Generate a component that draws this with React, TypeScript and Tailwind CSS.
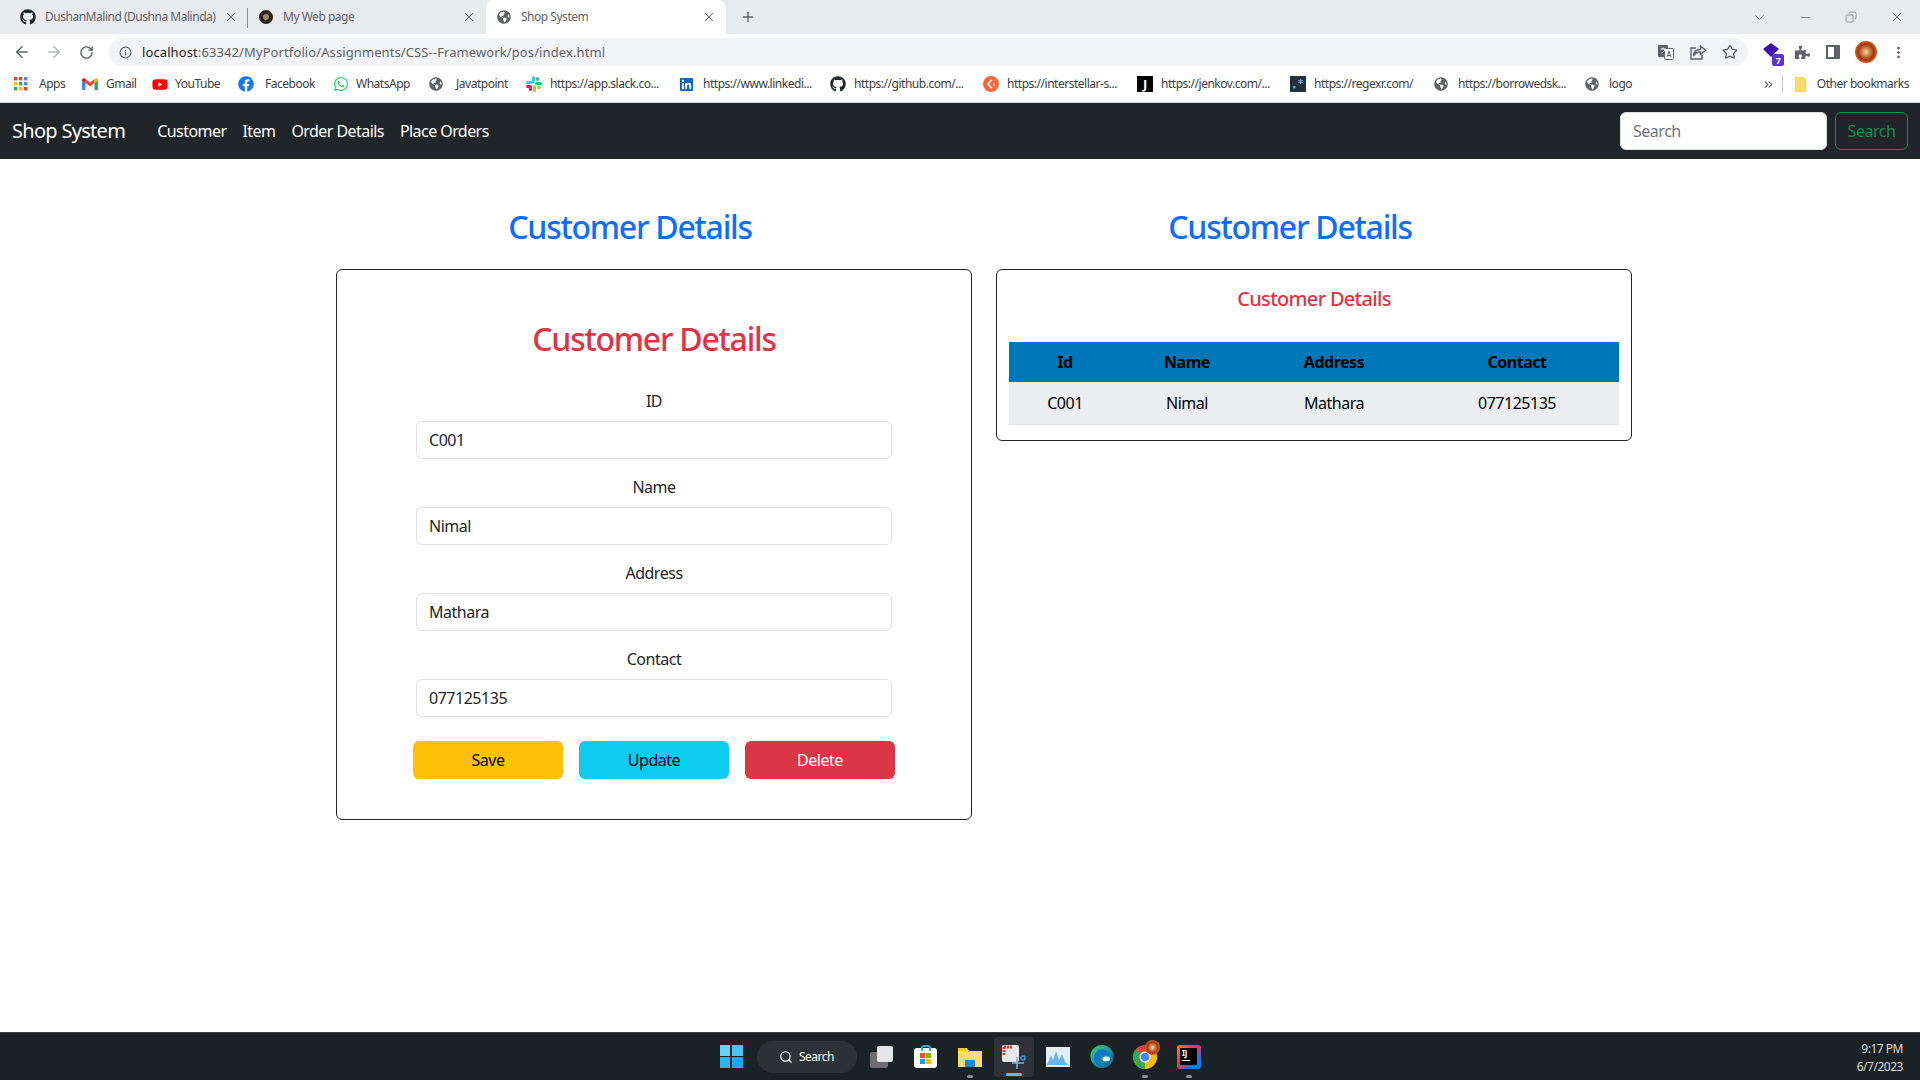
import React from "react";
import { ArrowLeft, ArrowRight, RotateCw, Info, Star, X, Plus, ChevronDown, Minus, Copy, MoreVertical, Search, ChevronsRight } from "lucide-react";
import { FaGithub, FaGlobeAmericas, FaFacebook, FaWhatsapp, FaLinkedin, FaPuzzlePiece, FaYoutube } from "react-icons/fa";

const Globe = () => <FaGlobeAmericas className="text-[#5f6368]" size={14} />;

const Gmail = () => (
  <svg width="16" height="14" viewBox="0 0 16 12">
    <path d="M0 2v9a1 1 0 0 0 1 1h2.5V5z" fill="#4285f4" />
    <path d="M16 2v9a1 1 0 0 1-1 1h-2.5V5z" fill="#34a853" />
    <path d="M3.5 5L8 8.4 12.5 5V1L8 4.4 3.5 1z" fill="#ea4335" />
    <path d="M0 2c0-1.6 1.9-2 3-1.4l.5.4v4L0 2.5z" fill="#c5221f" />
    <path d="M16 2c0-1.6-1.9-2-3-1.4l-.5.4v4l3.5-2.5z" fill="#fbbc04" />
  </svg>
);

const Slack = () => (
  <svg width="16" height="16" viewBox="0 0 16 16">
    <rect x="6" y="0" width="3" height="7" rx="1.5" fill="#36c5f0" />
    <rect x="0" y="5" width="7" height="3" rx="1.5" fill="#36c5f0" />
    <rect x="9" y="6" width="7" height="3" rx="1.5" fill="#2eb67d" />
    <rect x="10" y="1" width="3" height="4" rx="1.5" fill="#2eb67d" />
    <rect x="7" y="9" width="3" height="7" rx="1.5" fill="#ecb22e" />
    <rect x="11" y="10" width="4" height="3" rx="1.5" fill="#ecb22e" />
    <rect x="0" y="9" width="6" height="3" rx="1.5" fill="#e01e5a" />
    <rect x="3" y="11" width="3" height="4" rx="1.5" fill="#e01e5a" />
  </svg>
);

const AppsGrid = () => (
  <svg width="14" height="14" viewBox="0 0 14 14">
    {[
      [0, 0, "#ea4335"], [5, 0, "#ea4335"], [10, 0, "#4285f4"],
      [0, 5, "#fbbc04"], [5, 5, "#34a853"], [10, 5, "#4285f4"],
      [0, 10, "#34a853"], [5, 10, "#fbbc04"], [10, 10, "#ea4335"],
    ].map(([x, y, c], i) => (
      <rect key={i} x={x as number} y={y as number} width="3.4" height="3.4" fill={c as string} />
    ))}
  </svg>
);

const Interstellar = () => (
  <svg width="16" height="16" viewBox="0 0 16 16">
    <circle cx="8" cy="8" r="8" fill="#f4683a" />
    <path d="M9 3.5L5 8l4 4.5" stroke="#fff" strokeWidth="1.6" fill="none" />
    <path d="M11 7v3" stroke="#fff" strokeWidth="1" />
  </svg>
);

const Jenkov = () => (
  <span className="flex h-4 w-4 items-center justify-center bg-black text-[13px] font-bold leading-none text-white">J</span>
);

const Regex = () => (
  <svg width="16" height="16" viewBox="0 0 16 16">
    <rect width="16" height="16" fill="#25303b" />
    <rect x="3" y="10" width="2.5" height="2.5" fill="#6ea8d6" />
    <path d="M10.5 3v5M8.3 4.3l4.4 2.4M12.7 4.3L8.3 6.7" stroke="#6ea8d6" strokeWidth="1.1" />
  </svg>
);

const bookmarks: { w: number; icon: React.ReactNode; label: string; gap: number }[] = [
  { w: 68, icon: <AppsGrid />, label: "Apps", gap: 9 },
  { w: 70, icon: <Gmail />, label: "Gmail", gap: 8 },
  { w: 86, icon: <FaYoutube className="text-[#ff0000]" size={17} />, label: "YouTube", gap: 7 },
  { w: 95, icon: <FaFacebook className="text-[#1877f2]" size={16} />, label: "Facebook", gap: 11 },
  { w: 96, icon: <FaWhatsapp className="text-[#25d366]" size={16} />, label: "WhatsApp", gap: 7 },
  { w: 97, icon: <Globe />, label: "Javatpoint", gap: 11 },
  { w: 153, icon: <Slack />, label: "https://app.slack.co...", gap: 8 },
  { w: 151, icon: <FaLinkedin className="text-[#0a66c2]" size={15} />, label: "https://www.linkedi...", gap: 8 },
  { w: 153, icon: <FaGithub className="text-[#24292f]" size={16} />, label: "https://github.com/...", gap: 8 },
  { w: 154, icon: <Interstellar />, label: "https://interstellar-s...", gap: 8 },
  { w: 153, icon: <Jenkov />, label: "https://jenkov.com/...", gap: 8 },
  { w: 144, icon: <Regex />, label: "https://regexr.com/", gap: 8 },
  { w: 151, icon: <Globe />, label: "https://borrowedsk...", gap: 8 },
  { w: 60, icon: <Globe />, label: "logo", gap: 8 },
];

function Tab({ icon, label, active, width, sep }: { icon: React.ReactNode; label: string; active?: boolean; width: string; sep?: boolean }) {
  return (
    <div className={`relative flex h-[34px] items-center px-[10px] ${width} ${active ? "rounded-t-[8px] bg-white" : ""}`}>
      <span className="flex w-[16px] justify-center">{icon}</span>
      <span className="ml-[9px] flex-1 whitespace-nowrap text-[12px] text-[#5f6368]">{label}</span>
      <X size={14} strokeWidth={1.8} className="text-[#5f6368]" />
      {sep && <span className="absolute right-0 top-[8px] h-[20px] w-px bg-[#8a8d91]" />}
    </div>
  );
}

function Field({ label, value }: { label: string; value: string }) {
  return (
    <div className="mb-4 flex w-[476px] flex-col items-center">
      <label className="mb-2 h-6 text-[16px] leading-6 text-[#212529]">{label}</label>
      <input
        readOnly
        value={value}
        className="h-[38px] w-full rounded-[6px] border border-[#dee2e6] bg-white px-[12px] text-[16px] text-[#212529] outline-none"
      />
    </div>
  );
}

function TaskIcon({ children, className = "" }: { children: React.ReactNode; className?: string }) {
  return <div className={`flex h-6 w-6 items-center justify-center ${className}`}>{children}</div>;
}

const Avatar = ({ className }: { className: string }) => (
  <span className={`rounded-full bg-[radial-gradient(circle,#f7d9a0_0%,#a3360e_50%,#e8701a_78%,#5a1a08_100%)] ${className}`} />
);

export default function App() {
  return (
    <div className="flex h-screen w-full flex-col overflow-hidden bg-white font-['Noto_Sans',sans-serif] tracking-[-0.03em]">
      {/* Tab strip */}
      <div className="flex h-[34px] shrink-0 items-center bg-[#e8eaed] pl-[10px]">
        <Tab width="w-[238px]" sep icon={<FaGithub size={16} className="text-[#24292f]" />} label="DushanMalind (Dushna Malinda)" />
        <Tab
          width="w-[238px]"
          icon={<span className="flex h-[14px] w-[14px] items-center justify-center rounded-full bg-[#2b2418]"><span className="h-[6px] w-[6px] rounded-full bg-[#a08a5a]" /></span>}
          label="My Web page"
        />
        <Tab width="w-[240px]" active icon={<Globe />} label="Shop System" />
        <Plus size={16} strokeWidth={2} className="ml-[14px] text-[#5f6368]" />
        <div className="flex-1" />
        <ChevronDown size={15} strokeWidth={1.2} className="mr-[31px] text-[#5f6368]" />
        <Minus size={15} strokeWidth={1.2} className="mr-[32px] text-[#5f6368]" />
        <Copy size={12} strokeWidth={1.2} className="mr-[32px] -scale-x-100 text-[#5f6368]" />
        <X size={16} strokeWidth={1.2} className="mr-[15px] text-[#5f6368]" />
      </div>

      {/* Toolbar */}
      <div className="flex h-[32px] shrink-0 items-start bg-white pt-[4px]">
        <div className="flex h-[28px] w-[109px] items-center pl-[13px]">
          <ArrowLeft size={18} strokeWidth={2} className="text-[#5f6368]" />
          <ArrowRight size={18} strokeWidth={2} className="ml-[14px] text-[#b4b7bb]" />
          <RotateCw size={15} strokeWidth={2.2} className="ml-[16px] text-[#5f6368]" />
        </div>
        <div className="flex h-[28px] w-[1639px] items-center rounded-full bg-[#f1f3f4] pl-[10px]">
          <Info size={13} strokeWidth={2} className="text-[#5f6368]" />
          <span className="ml-[10px] pt-[2px] text-[13px] tracking-[0.1px] text-[#5f6368]"><span className="text-[#202124]">localhost</span>:63342/MyPortfolio/Assignments/CSS--Framework/pos/index.html</span>
          <div className="flex-1" />
          <svg width="16" height="15" viewBox="0 0 16 15" className="mr-[16px]">
            <rect x="0" y="0" width="10" height="12" rx="1" fill="#5f6368" />
            <rect x="6.5" y="3.5" width="9" height="11" rx="1" fill="#fff" stroke="#5f6368" />
            <path d="M2.5 4h5M5 2.5v1.5M3.5 8c2-1 3-2 3.5-4" stroke="#fff" strokeWidth="1" fill="none" />
            <path d="M9 12l2-6 2 6M9.8 10.5h2.4" stroke="#5f6368" strokeWidth="1" fill="none" />
          </svg>
          <svg width="17" height="15" viewBox="0 0 17 15" fill="none" stroke="#5f6368" strokeWidth="1.4" className="mr-[15px]">
            <path d="M6 3H1v11h11v-4" />
            <path d="M10.5 1l5 4.2-5 4.2V7C7.5 7 5 8 3.5 11c.4-4 3-6.800 7-6.800z" />
          </svg>
          <Star size={16} strokeWidth={2} className="mr-[10px] text-[#5f6368]" />
        </div>
        <div className="flex h-[28px] flex-1 items-center pl-[14px]">
          <div className="relative h-[18px] w-[22px]">
            <svg width="18" height="14" viewBox="0 0 18 14"><path d="M9 0l8 6-8 8-8-8z" fill="#3f0fa8" /></svg>
            <span className="absolute -bottom-[5px] right-0 flex h-[12px] w-[12px] items-center justify-center rounded-[2px] bg-[#5b35c4] text-[9px] font-bold leading-none text-white">7</span>
          </div>
          <FaPuzzlePiece size={15} className="ml-[11px] text-[#5f6368]" />
          <span className="ml-[16px] flex h-[14px] w-[14px] justify-start border-2 border-[#5f6368] bg-[#5f6368]"><span className="h-full w-[6px] bg-white" /></span>
          <Avatar className="ml-[15px] h-[22px] w-[22px]" />
          <MoreVertical size={15} strokeWidth={2.4} className="ml-[14px] text-[#5f6368]" />
        </div>
      </div>

      {/* Bookmarks */}
      <div className="flex h-[37px] shrink-0 items-center border-b border-[#d9dadc] bg-white pl-[14px] text-[12px] text-[#3c4043]">
        {bookmarks.map((b) => (
          <div key={b.label} className="flex shrink-0 items-center" style={{ width: b.w }}>
            <span className="flex w-[16px] shrink-0 justify-start">{b.icon}</span>
            <span className="whitespace-nowrap" style={{ marginLeft: b.gap }}>{b.label}</span>
          </div>
        ))}
        <div className="flex-1" />
        <ChevronsRight size={13} strokeWidth={2} className="mr-[7px] text-[#5f6368]" />
        <span className="mr-[12px] h-[16px] w-px bg-[#c8cacc]" />
        <svg width="12" height="15" viewBox="0 0 12 15" className="mr-[10px]">
          <path d="M0 0h8l3 3v12H0z" fill="#fbd96f" stroke="#e8c04a" strokeWidth="0.5" />
        </svg>
        <span className="mr-[11px] whitespace-nowrap">Other bookmarks</span>
      </div>

      {/* Navbar */}
      <nav className="flex h-[56px] shrink-0 items-center bg-[#212529] px-3">
        <span className="text-[20px] tracking-[-0.035em] text-white">Shop System</span>
        <div className="ml-[32px] flex items-center gap-[16px] text-[16px] tracking-[-0.035em] text-white">
          <span>Customer</span>
          <span>Item</span>
          <span>Order Details</span>
          <span>Place Orders</span>
        </div>
        <div className="flex-1" />
        <input
          placeholder="Search"
          className="h-[38px] w-[207px] rounded-[6px] border border-[#dee2e6] bg-white px-3 text-[16px] outline-none placeholder:text-[#6c757d]"
        />
        <button className="ml-2 h-[38px] w-[73px] rounded-[6px] border border-[#198754] text-[16px] text-[#198754]">Search</button>
      </nav>

      {/* Main */}
      <main className="mx-auto grid w-[1320px] flex-1 grid-cols-2 content-start pt-[49px]">
        <section className="px-3">
          <h2 className="mb-[23px] h-[38px] text-center text-[32px] font-medium leading-[38px] tracking-[-0.039em] text-[#0d6efd]">Customer Details</h2>
          <div className="ml-6 flex h-[551px] w-[636px] flex-col items-center rounded-[6px] border border-[#212529] pt-[50px]">
            <h2 className="mb-[31px] h-[38px] text-[32px] font-medium leading-[38px] tracking-[-0.039em] text-[#dc3545]">Customer Details</h2>
            <Field label="ID" value="C001" />
            <Field label="Name" value="Nimal" />
            <Field label="Address" value="Mathara" />
            <Field label="Contact" value="077125135" />
            <div className="mt-2 flex w-[482px] gap-4">
              <button className="h-[38px] w-[150px] rounded-[6px] bg-[#ffc107] text-[16px] text-black">Save</button>
              <button className="h-[38px] w-[150px] rounded-[6px] bg-[#0dcaf0] text-[16px] text-black">Update</button>
              <button className="h-[38px] w-[150px] rounded-[6px] bg-[#dc3545] text-[16px] text-white">Delete</button>
            </div>
          </div>
        </section>
        <section className="px-3">
          <h2 className="mb-[23px] h-[38px] text-center text-[32px] font-medium leading-[38px] tracking-[-0.039em] text-[#0d6efd]">Customer Details</h2>
          <div className="ml-6 flex h-[172px] w-[636px] flex-col items-center rounded-[6px] border border-[#212529] pt-[17px]">
            <h4 className="mb-[13px] h-[24px] text-[20px] font-medium leading-6 tracking-[-0.035em] text-[#dc3545]">Customer Details</h4>
            <table className="mt-[18px] w-[610px] table-fixed border-collapse text-center text-[16px] text-black">
              <colgroup>
                <col className="w-[112px]" />
                <col className="w-[132px]" />
                <col className="w-[162px]" />
                <col className="w-[204px]" />
              </colgroup>
              <thead>
                <tr className="h-[40px] bg-[#0077b6] font-bold">
                  <th>Id</th>
                  <th>Name</th>
                  <th>Address</th>
                  <th>Contact</th>
                </tr>
              </thead>
              <tbody>
                <tr className="h-[42px] border-b border-[#dee2e6] bg-[#ecedef]">
                  <td>C001</td>
                  <td>Nimal</td>
                  <td>Mathara</td>
                  <td>077125135</td>
                </tr>
              </tbody>
            </table>
          </div>
        </section>
      </main>

      {/* Taskbar */}
      <footer className="relative flex h-[48px] shrink-0 items-center justify-center border-t border-[#3a3f42] bg-[#1b2225]">
        <div className="flex items-center">
          <div className="grid h-[23px] w-[23px] grid-cols-2 gap-[1.5px]">
            <span className="bg-[#63d2fb]" />
            <span className="bg-[#4cc3f7]" />
            <span className="bg-[#2fb4f5]" />
            <span className="bg-[#1ba4f1]" />
          </div>
          <div className="ml-[14px] flex h-[32px] w-[100px] items-center justify-center gap-[6px] rounded-full bg-[#2c3336] text-[12px] text-white">
            <Search size={14} strokeWidth={2} />
            Search
          </div>
          <TaskIcon className="ml-[13px]">
            <span className="relative h-[22px] w-[24px]">
              <span className="absolute bottom-0 left-0 h-[16px] w-[18px] rounded-[2px] bg-[#6b6f71]" />
              <span className="absolute right-[1px] top-0 h-[16px] w-[16px] rounded-[2px] bg-[#e4e5e6]" />
            </span>
          </TaskIcon>
          <TaskIcon className="relative ml-[20px]">
            <span className="absolute left-[7px] top-0 h-[6px] w-[10px] rounded-t-[3px] border-2 border-b-0 border-[#29a8e0]" />
            <span className="mt-[3px] grid h-[20px] w-[23px] grid-cols-2 content-center justify-items-center gap-[1px] rounded-[3px] bg-white px-[6px]">
              <span className="h-[5px] w-[5px] bg-[#f25022]" />
              <span className="h-[5px] w-[5px] bg-[#7fba00]" />
              <span className="h-[5px] w-[5px] bg-[#00a4ef]" />
              <span className="h-[5px] w-[5px] bg-[#ffb900]" />
            </span>
          </TaskIcon>
          <TaskIcon className="relative ml-[20px]">
            <svg width="24" height="22" viewBox="0 0 24 22">
              <path d="M0 2h9l2 3h13v16H0z" fill="#f4c63d" />
              <rect x="0" y="5" width="24" height="16" fill="#fbdc6a" />
              <rect x="7" y="14" width="10" height="7" rx="1" fill="#1a86d9" />
            </svg>
            <span className="absolute -bottom-[9px] left-[9px] h-[3px] w-[6px] rounded-full bg-[#8a8f92]" />
          </TaskIcon>
          <div className="relative ml-[12px] flex h-[40px] w-[40px] items-center justify-center rounded-[4px] bg-[#2d3336]">
            <svg width="24" height="24" viewBox="0 0 24 24">
              <rect x="0" y="0" width="17" height="17" rx="2" fill="#e8e8e8" />
              <path d="M2 2h8M2 2v8" stroke="#d13a26" strokeWidth="3" strokeDasharray="2 1" />
              <path d="M15 12v12M10 18h12" stroke="#7fb0d8" strokeWidth="1.5" />
              <circle cx="21" cy="13" r="2" fill="none" stroke="#3aa0e8" strokeWidth="1.5" />
            </svg>
            <span className="absolute bottom-[1px] left-[12px] h-[3px] w-[16px] rounded-full bg-[#4cc2ff]" />
          </div>
          <TaskIcon className="ml-[12px]">
            <svg width="24" height="20" viewBox="0 0 24 20">
              <rect width="24" height="20" fill="#e6eef5" />
              <path d="M1 18L5 8l2 5 3-9 3 9 3-6 3 8 4 3z" fill="#6cb5e8" />
            </svg>
          </TaskIcon>
          <TaskIcon className="ml-[20px]">
            <svg width="25" height="25" viewBox="0 0 25 25">
              <defs>
                <linearGradient id="edge" x1="0" y1="0" x2="1" y2="1">
                  <stop offset="0" stopColor="#3bd37f" />
                  <stop offset="1" stopColor="#0c59a4" />
                </linearGradient>
              </defs>
              <circle cx="12.5" cy="12.5" r="12" fill="url(#edge)" />
              <path d="M11 14c0-3 5-4 9-2 1-3-3-7-8-7-3 0-8 3-8 9 0 5 4 9 9 9-3-2-2-6-2-9z" fill="#0f76c8" />
              <ellipse cx="17" cy="15" rx="4" ry="2.500" fill="#e8f7ea" />
            </svg>
          </TaskIcon>
          <TaskIcon className="relative ml-[19px]">
            <svg width="24" height="24" viewBox="0 0 24 24">
              <circle cx="12" cy="12" r="12" fill="#ea4335" />
              <path d="M12 12L1.600 18A12 12 0 0 1 3 4.500z" fill="#34a853" />
              <path d="M12 12l10.400-6A12 12 0 0 1 12 24L1.600 18z" fill="#fbbc04" />
              <path d="M12 12L12 24A12 12 0 0 1 1.600 18z" fill="#34a853" />
              <circle cx="12" cy="12" r="5.500" fill="#fff" />
              <circle cx="12" cy="12" r="4.300" fill="#4285f4" />
            </svg>
            <Avatar className="absolute -right-[3px] -top-[5px] h-[15px] w-[15px]" />
            <span className="absolute -bottom-[9px] left-[9px] h-[3px] w-[6px] rounded-full bg-[#8a8f92]" />
          </TaskIcon>
          <TaskIcon className="relative ml-[20px]">
            <span className="relative flex h-[24px] w-[24px] items-center justify-center rounded-[3px] bg-[linear-gradient(135deg,#fc801d,#fe2857_45%,#087cfa_80%)]">
              <span className="flex h-[17px] w-[17px] flex-col bg-black px-[2px] pt-[1px] text-[8px] font-bold leading-[8px] text-white">
                IJ
                <span className="mt-[3px] h-[1px] w-[8px] bg-white" />
              </span>
            </span>
            <span className="absolute -bottom-[9px] left-[9px] h-[3px] w-[6px] rounded-full bg-[#8a8f92]" />
          </TaskIcon>
        </div>
        <div className="absolute right-[17px] top-[7px] text-right text-[12px] leading-[18px] text-[#dcdcdc]">
          <div>9:17 PM</div>
          <div>6/7/2023</div>
        </div>
      </footer>
    </div>
  );
}
